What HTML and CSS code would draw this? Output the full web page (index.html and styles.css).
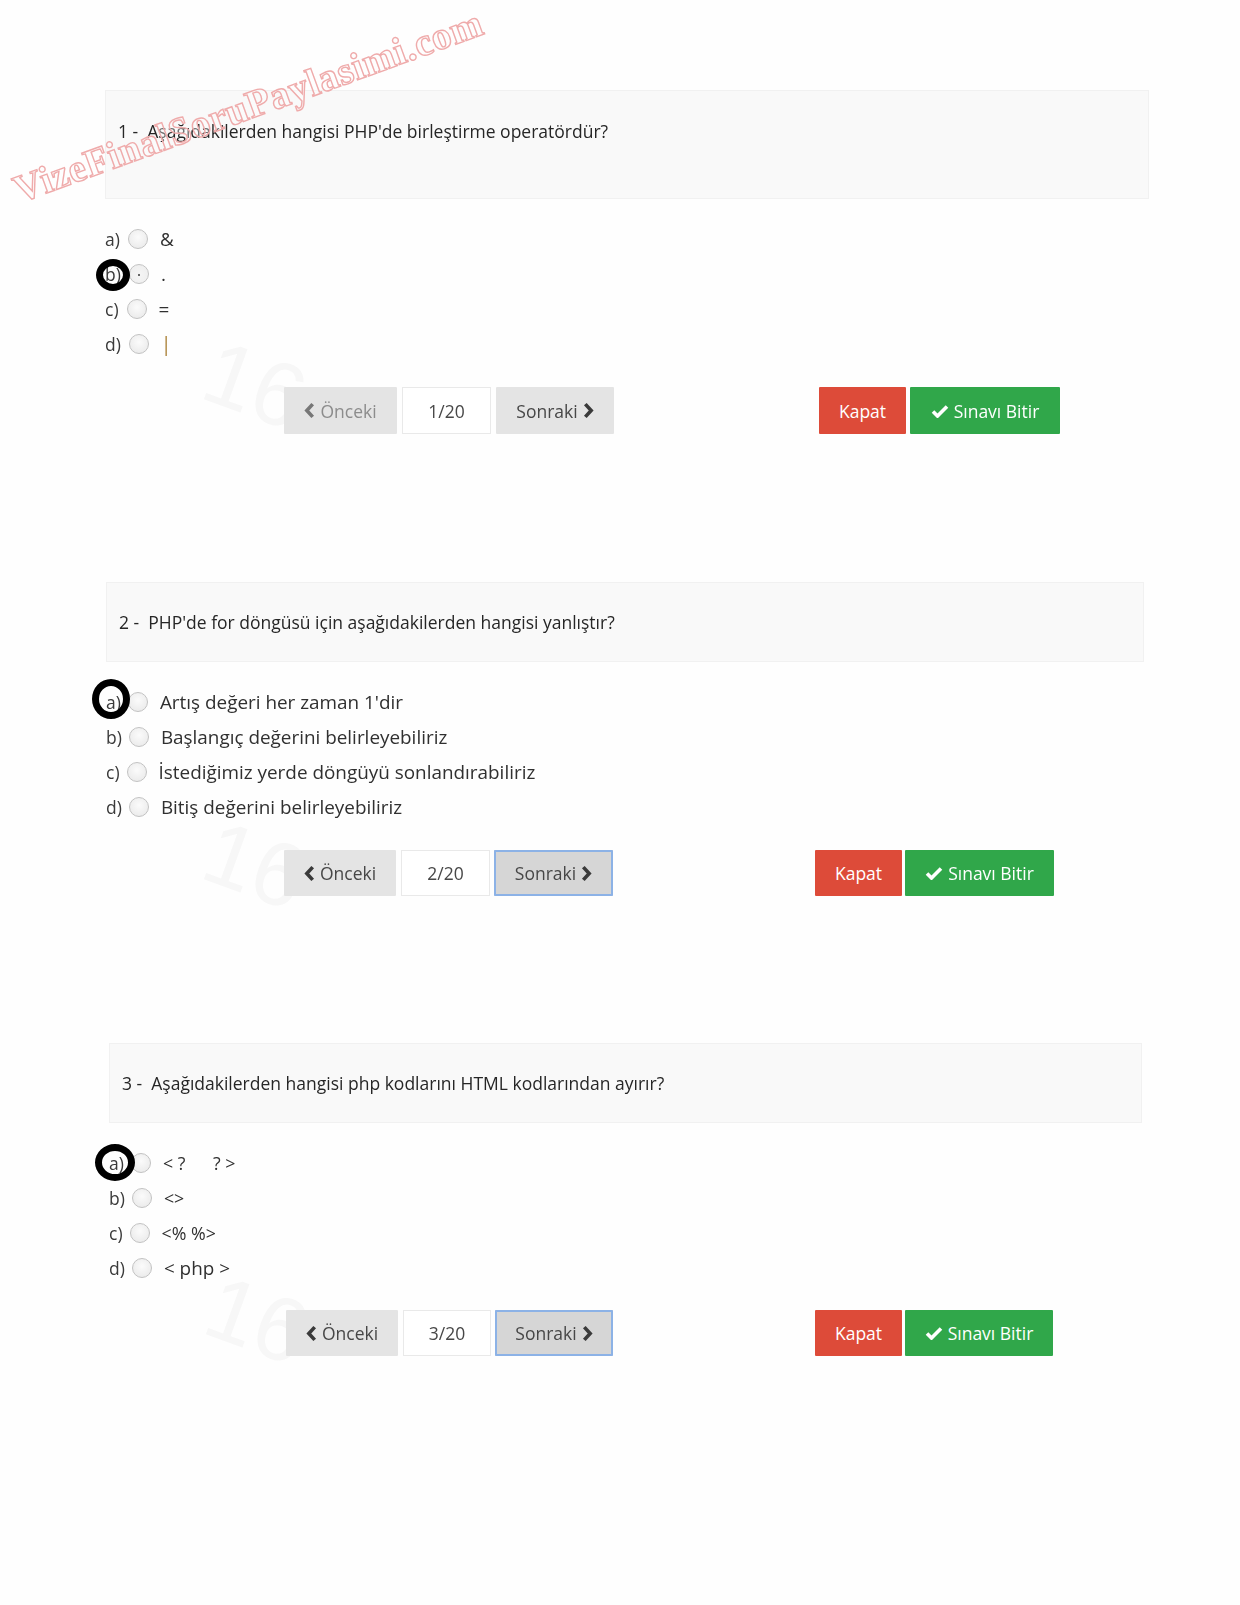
FILE: index.html
```html
<!DOCTYPE html>
<html lang="tr">
<head>
<meta charset="utf-8">
<title>Sınav</title>
<link rel="stylesheet" href="styles.css">
</head>
<body>
<main class="page">
  <div class="stamp stamp-1">16</div>
  <div class="stamp stamp-2">16</div>
  <div class="stamp stamp-3">16</div>

  <section class="question q1">
    <div class="q-box">1 -&nbsp; Aşağıdakilerden hangisi PHP'de birleştirme operatördür?</div>
    <div class="options">
      <label class="option"><span class="key">a)</span><input class="radio" type="radio" name="q1"><span class="answer">&amp;</span></label>
      <label class="option"><span class="key marked marked-1">b)</span><input class="radio dotted" type="radio" name="q1"><span class="answer">.</span></label>
      <label class="option"><span class="key">c)</span><input class="radio" type="radio" name="q1"><span class="answer">=</span></label>
      <label class="option"><span class="key">d)</span><input class="radio" type="radio" name="q1"><span class="answer pipe">|</span></label>
    </div>
    <div class="nav">
      <button class="btn btn-grey btn-prev dim" type="button"><svg class="chev" viewBox="0 0 10 16"><path d="M8 2 2.500 8 8 14"/></svg> Önceki</button>
      <span class="count">1/20</span>
      <button class="btn btn-grey btn-next" type="button">Sonraki <svg class="chev" viewBox="0 0 10 16"><path d="M2 2 7.500 8 2 14"/></svg></button>
      <button class="btn btn-red" type="button">Kapat</button>
      <button class="btn btn-green" type="button"><svg class="check" viewBox="0 0 18 14"><path d="M2 7.500 6.500 12 16 2.500"/></svg> Sınavı Bitir</button>
    </div>
  </section>

  <section class="question q2">
    <div class="q-box">2 -&nbsp; PHP'de for döngüsü için aşağıdakilerden hangisi yanlıştır?</div>
    <div class="options">
      <label class="option"><span class="key marked marked-2">a)</span><input class="radio" type="radio" name="q2"><span class="answer">Artış değeri her zaman 1'dir</span></label>
      <label class="option"><span class="key">b)</span><input class="radio" type="radio" name="q2"><span class="answer">Başlangıç değerini belirleyebiliriz</span></label>
      <label class="option"><span class="key">c)</span><input class="radio" type="radio" name="q2"><span class="answer">İstediğimiz yerde döngüyü sonlandırabiliriz</span></label>
      <label class="option"><span class="key">d)</span><input class="radio" type="radio" name="q2"><span class="answer">Bitiş değerini belirleyebiliriz</span></label>
    </div>
    <div class="nav">
      <button class="btn btn-grey btn-prev" type="button"><svg class="chev" viewBox="0 0 10 16"><path d="M8 2 2.500 8 8 14"/></svg> Önceki</button>
      <span class="count">2/20</span>
      <button class="btn btn-grey btn-next focus" type="button">Sonraki <svg class="chev" viewBox="0 0 10 16"><path d="M2 2 7.500 8 2 14"/></svg></button>
      <button class="btn btn-red" type="button">Kapat</button>
      <button class="btn btn-green" type="button"><svg class="check" viewBox="0 0 18 14"><path d="M2 7.500 6.500 12 16 2.500"/></svg> Sınavı Bitir</button>
    </div>
  </section>

  <section class="question q3">
    <div class="q-box">3 -&nbsp; Aşağıdakilerden hangisi php kodlarını HTML kodlarından ayırır?</div>
    <div class="options">
      <label class="option"><span class="key marked marked-3">a)</span><input class="radio" type="radio" name="q3"><span class="answer small">&lt; ?&nbsp;&nbsp;&nbsp;&nbsp;&nbsp; ? &gt;</span></label>
      <label class="option"><span class="key">b)</span><input class="radio" type="radio" name="q3"><span class="answer small">&lt;&gt;</span></label>
      <label class="option"><span class="key">c)</span><input class="radio" type="radio" name="q3"><span class="answer small">&lt;% %&gt;</span></label>
      <label class="option"><span class="key">d)</span><input class="radio" type="radio" name="q3"><span class="answer">&lt; php &gt;</span></label>
    </div>
    <div class="nav">
      <button class="btn btn-grey btn-prev" type="button"><svg class="chev" viewBox="0 0 10 16"><path d="M8 2 2.500 8 8 14"/></svg> Önceki</button>
      <span class="count">3/20</span>
      <button class="btn btn-grey btn-next focus" type="button">Sonraki <svg class="chev" viewBox="0 0 10 16"><path d="M2 2 7.500 8 2 14"/></svg></button>
      <button class="btn btn-red" type="button">Kapat</button>
      <button class="btn btn-green" type="button"><svg class="check" viewBox="0 0 18 14"><path d="M2 7.500 6.500 12 16 2.500"/></svg> Sınavı Bitir</button>
    </div>
  </section>

  <div class="watermark">VizeFinalSoruPaylasimi.com</div>
</main>
</body>
</html>
```
FILE: styles.css
```css
* { box-sizing: border-box; }
html, body { margin: 0; background: #fefefe; }
body { font-family: "Open Sans", "Noto Sans", sans-serif; color: #3a3a3a; }

.page {
  position: relative;
  width: 1240px;
  height: 1605px;
  overflow: hidden;
  filter: blur(0.3px);
  padding-top: 90px;
}

.question { display: flex; flex-direction: column; }

.q1 { padding-left: 105px; margin-bottom: 148px; }
.q2 { padding-left: 106px; margin-bottom: 147px; }
.q3 { padding-left: 109px; }

.q-box {
  background: #f9f9f9;
  border: 1px solid #f1f1f1;
  padding: 29px 12px 28px;
  font-size: 17.5px;
  line-height: 22px;
  color: #262626;
}
.q1 .q-box { width: 1044px; height: 109px; }
.q2 .q-box { width: 1038px; height: 80px; padding-top: 28px; }
.q3 .q-box { width: 1033px; height: 80px; padding-top: 28px; }

.options { display: flex; flex-direction: column; }
.q1 .options { margin-top: 22px; }
.q2 .options { margin-top: 22.5px; }
.q3 .options { margin-top: 22.5px; }

.option {
  display: flex;
  align-items: center;
  height: 35px;
  font-size: 18.9px;
}
.key { position: relative; font-size: 17.5px; color: #3a3a3a; }

.radio {
  appearance: none;
  -webkit-appearance: none;
  width: 20px;
  height: 20px;
  margin: 0 12px 0 7px;
  border-radius: 50%;
  border: 1px solid #c2c2c2;
  background: radial-gradient(circle at 50% 40%, #fbfbfb, #e7e7e7);
  flex: none;
}
.q1 .radio { margin-left: 8px; }
.radio.dotted {
  background: radial-gradient(circle at 50% 55%, #666 0, #666 1px, #f4f4f4 1.5px, #ececec 100%);
}
.answer { white-space: pre; color: #303030; }
.answer.small { font-size: 17.8px; }
.answer.pipe { color: #b9975a; font-weight: 600; }

.marked::after {
  content: "";
  box-sizing: border-box;
  position: absolute;
  border: 7px solid #000;
  border-radius: 50%;
}
.marked-1::after { left: -9px; top: -3px; width: 34px; height: 32px; }
.marked-2::after { left: -14px; top: -11px; width: 38px; height: 40px; }
.marked-3::after { left: -14.5px; top: -7px; width: 40px; height: 37px; }

.nav {
  display: flex;
  align-items: stretch;
  height: 46px;
  margin-top: 25px;
}
.q1 .nav { margin-left: 179px; margin-top: 26px; height: 47px; }
.q2 .nav { margin-left: 178px; margin-top: 25.5px; }
.q3 .nav { margin-left: 177px; margin-top: 24.5px; }

.btn {
  display: inline-flex;
  align-items: center;
  justify-content: center;
  gap: 5px;
  border: 0;
  border-radius: 1px;
  padding: 0;
  font-family: inherit;
  font-size: 17.5px;
}
.btn-grey { background: #e4e4e4; color: #474747; }
.btn-prev { width: 113px; }
.btn-next { width: 118px; }
.q2 .btn-next { width: 119px; }
.q2 .btn-prev, .q3 .btn-prev { width: 112px; }
.btn-prev.dim { color: #8c8c8c; }
.btn-next.focus {
  background: #d6d6d6;
  box-shadow: inset 0 0 0 2px #8cb2e6;
}

.count {
  display: flex;
  align-items: center;
  justify-content: center;
  width: 89px;
  margin: 0 5px;
  background: #fff;
  border: 1px solid #e9e9e9;
  font-size: 17.5px;
  color: #474747;
}
.q2 .count { width: 89px; margin-right: 4px; }
.q3 .count { width: 88px; margin-right: 4px; }

.btn-red {
  width: 87px;
  background: #dd4b39;
  color: #fff;
}
.q1 .btn-red { margin-left: 205px; }
.q2 .btn-red { margin-left: 202px; }
.q3 .btn-red { margin-left: 202px; }

.btn-green {
  width: 150px;
  margin-left: 4px;
  background: #30a74a;
  color: #fff;
}
.q2 .btn-green { margin-left: 3px; width: 149px; }
.q3 .btn-green { margin-left: 3px; width: 148px; }

.chev { width: 11px; height: 17px; fill: none; stroke: currentColor; stroke-width: 3.4; }
.btn-prev.dim .chev { stroke: #777; }
.btn-grey .chev { stroke: #3a3a3a; }
.check { width: 18px; height: 14px; fill: none; stroke: #fff; stroke-width: 3.6; }

.watermark {
  position: absolute;
  left: 0;
  top: 86px;
  transform: rotate(-20deg);
  font-family: "Liberation Serif", serif;
  font-weight: 700;
  font-size: 39px;
  line-height: 1;
  white-space: nowrap;
  color: rgba(255, 255, 255, 0.35);
  -webkit-text-stroke: 1.4px #efabab;
  letter-spacing: 0.6px;
}

.stamp {
  position: absolute;
  font-family: "Liberation Sans", sans-serif;
  font-size: 90px;
  line-height: 1;
  color: #f7f7f7;
  transform: rotate(20deg);
  z-index: -1;
}
.stamp-1 { left: 205px; top: 340px; }
.stamp-2 { left: 205px; top: 820px; }
.stamp-3 { left: 207px; top: 1275px; }
```
